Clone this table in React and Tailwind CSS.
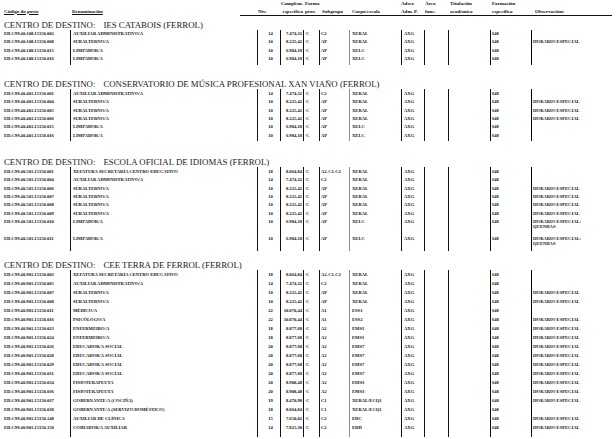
import React from 'react';

const COLS = 'grid grid-cols-[70px_187px_23px_23px_16px_30px_52px_23px_24px_42px_41px_1fr]';

const HE = 'HORARIO ESPECIAL';

const sections = [
  {
    name: 'IES CATABOIS (FERROL)',
    mt: 'mt-[4.5px]',
    rowH: 'h-[8.3px]',
    spacer: 'h-[2px]',
    rows: [
      ['ED.C99.40.108.15150.002', 'AUXILIAR ADMINISTRATIVO/A', '14', '7.474,32', 'C', 'C2', 'XERAL', ''],
      ['ED.C99.40.108.15150.008', 'SUBALTERNO/A', '10', '8.225,42', 'C', 'AP', 'XERAL', HE],
      ['ED.C99.40.108.15150.015', 'LIMPADOR/A', '10', '6.984,18', 'C', 'AP', 'XELC', ''],
      ['ED.C99.40.108.15150.016', 'LIMPADOR/A', '10', '6.984,18', 'C', 'AP', 'XELC', ''],
    ],
  },
  {
    name: 'CONSERVATORIO DE MÚSICA PROFESIONAL XAN VIAÑO (FERROL)',
    mt: 'mt-[15.8px]',
    rowH: 'h-[8.3px]',
    spacer: 'h-[2px]',
    rows: [
      ['ED.C99.40.401.15150.001', 'AUXILIAR ADMINISTRATIVO/A', '14', '7.474,32', 'C', 'C2', 'XERAL', ''],
      ['ED.C99.40.401.15150.004', 'SUBALTERNO/A', '10', '8.225,42', 'C', 'AP', 'XERAL', HE],
      ['ED.C99.40.401.15150.005', 'SUBALTERNO/A', '10', '8.225,42', 'C', 'AP', 'XERAL', HE],
      ['ED.C99.40.401.15150.006', 'SUBALTERNO/A', '10', '8.225,42', 'C', 'AP', 'XERAL', HE],
      ['ED.C99.40.401.15150.015', 'LIMPADOR/A', '10', '6.984,18', 'C', 'AP', 'XELC', ''],
      ['ED.C99.40.401.15150.016', 'LIMPADOR/A', '10', '6.984,18', 'C', 'AP', 'XELC', ''],
    ],
  },
  {
    name: 'ESCOLA OFICIAL DE IDIOMAS (FERROL)',
    mt: 'mt-[17.2px]',
    rowH: 'h-[8.3px]',
    spacer: 'h-[4px]',
    rows: [
      ['ED.C99.40.501.15150.001', 'XEFATURA SECRETARÍA CENTRO EDUCATIVO', '18', '8.064,84', 'C', 'A2-C1-C2', 'XERAL', ''],
      ['ED.C99.40.501.15150.004', 'AUXILIAR ADMINISTRATIVO/A', '14', '7.474,32', 'C', 'C2', 'XERAL', ''],
      ['ED.C99.40.501.15150.006', 'SUBALTERNO/A', '10', '8.225,42', 'C', 'AP', 'XERAL', HE],
      ['ED.C99.40.501.15150.007', 'SUBALTERNO/A', '10', '8.225,42', 'C', 'AP', 'XERAL', HE],
      ['ED.C99.40.501.15150.008', 'SUBALTERNO/A', '10', '8.225,42', 'C', 'AP', 'XERAL', HE],
      ['ED.C99.40.501.15150.009', 'SUBALTERNO/A', '10', '8.225,42', 'C', 'AP', 'XERAL', HE],
      ['ED.C99.40.501.15150.010', 'LIMPADOR/A', '10', '6.984,18', 'C', 'AP', 'XELC', 'HORARIO ESPECIAL:\nQUENDAS', 'h-[17px]'],
      ['ED.C99.40.501.15150.011', 'LIMPADOR/A', '10', '6.984,18', 'C', 'AP', 'XELC', 'HORARIO ESPECIAL:\nQUENDAS', 'h-[13px]'],
    ],
  },
  {
    name: 'CEE TERRA DE FERROL (FERROL)',
    mt: 'mt-[10.2px]',
    rowH: 'h-[9px]',
    spacer: 'h-[5px]',
    rows: [
      ['ED.C99.40.901.15150.003', 'XEFATURA SECRETARÍA CENTRO EDUCATIVO', '18', '8.064,84', 'C', 'A2-C1-C2', 'XERAL', ''],
      ['ED.C99.40.901.15150.005', 'AUXILIAR ADMINISTRATIVO/A', '14', '7.474,32', 'C', 'C2', 'XERAL', ''],
      ['ED.C99.40.901.15150.007', 'SUBALTERNO/A', '10', '8.225,42', 'C', 'AP', 'XERAL', HE],
      ['ED.C99.40.901.15150.008', 'SUBALTERNO/A', '10', '8.225,42', 'C', 'AP', 'XERAL', HE],
      ['ED.C99.40.901.15150.011', 'MÉDICO/A', '22', '10.870,44', 'C', 'A1', 'ESS1', ''],
      ['ED.C99.40.901.15150.016', 'PSICÓLOGO/A', '22', '10.870,44', 'C', 'A1', 'ESS2', HE],
      ['ED.C99.40.901.15150.023', 'ENFERMEIRO/A', '18', '8.877,68', 'C', 'A2', 'EMS1', HE],
      ['ED.C99.40.901.15150.024', 'ENFERMEIRO/A', '18', '8.877,68', 'C', 'A2', 'EMS1', HE],
      ['ED.C99.40.901.15150.026', 'EDUCADOR/A SOCIAL', '20', '8.877,68', 'C', 'A2', 'EMS7', HE],
      ['ED.C99.40.901.15150.028', 'EDUCADOR/A SOCIAL', '20', '8.877,68', 'C', 'A2', 'EMS7', HE],
      ['ED.C99.40.901.15150.029', 'EDUCADOR/A SOCIAL', '20', '8.877,68', 'C', 'A2', 'EMS7', HE],
      ['ED.C99.40.901.15150.031', 'EDUCADOR/A SOCIAL', '20', '8.877,68', 'C', 'A2', 'EMS7', HE],
      ['ED.C99.40.901.15150.034', 'FISIOTERAPEUTA', '20', '8.908,48', 'C', 'A2', 'EMS3', HE],
      ['ED.C99.40.901.15150.036', 'FISIOTERAPEUTA', '20', '8.908,48', 'C', 'A2', 'EMS3', HE],
      ['ED.C99.40.901.15150.037', 'GOBERNANTE/A (COCIÑA)', '19', '8.470,98', 'C', 'C1', 'XERAL/ECQ1', HE],
      ['ED.C99.40.901.15150.038', 'GOBERNANTE/A (SERVIZO DOMÉSTICO)', '18', '8.064,84', 'C', 'C1', 'XERAL/ECQ1', ''],
      ['ED.C99.40.901.15150.148', 'AUXILIAR DE CLÍNICA', '15', '7.650,02', 'C', 'C2', 'EDC', HE],
      ['ED.C99.40.901.15150.150', 'COIDADOR/A AUXILIAR', '14', '7.825,30', 'C', 'C2', 'EDD', HE],
    ],
  },
];

const bar = 'border-l border-[#111]';
const cell = 'pt-[1.6px] leading-[5px] whitespace-nowrap';

const Row = ({ r, h }) => {
  const [code, denom, niv, comp, forma, sub, corpo, obs, rowH] = r;
  return (
    <div className={`${COLS} ${rowH || h}`}>
      <div className={`${cell} pl-[4px]`}>{code}</div>
      <div className={`${cell} ${bar} pl-[2px]`}>{denom}</div>
      <div className={`${cell} ${bar} text-center pl-[3px]`}>{niv}</div>
      <div className={`${cell} ${bar} text-right pr-[1px]`}>{comp}</div>
      <div className={`${cell} ${bar} pl-[2px]`}>{forma}</div>
      <div className={`${cell} ${bar} pl-[1px]`}>{sub}</div>
      <div className={`${cell} border-l-[1.5px] border-[#8c8c8c] pl-[2px]`}>{corpo}</div>
      <div className={`${cell} ${bar} pl-[2px]`}>AXG</div>
      <div className={`${cell} ${bar}`}></div>
      <div className={`${cell} ${bar}`}></div>
      <div className={`${cell} ${bar} pl-[1px]`}>648</div>
      <div className={`${cell} border-l border-black pl-[1px] whitespace-pre`}>{obs}</div>
    </div>
  );
};

const Spacer = ({ h }) => (
  <div className={`${COLS} ${h}`}>
    <div></div>
    {Array.from({ length: 11 }).map((_, i) => (
      <div key={i} className={i === 5 ? 'border-l-[1.5px] border-[#8c8c8c]' : bar}></div>
    ))}
  </div>
);

const Header = () => (
  <div className="font-bold text-[5px] leading-[7.5px] text-[#111]">
    <div className={`${COLS} h-[15px]`}>
      <div className="pl-[4px] pt-[7.5px]"><span className="underline">Código do posto</span></div>
      <div className="pl-[2px] pt-[7.5px]"><span className="underline">Denominación</span></div>
      <div className="pt-[7.5px] pl-[1px]">Niv.</div>
      <div className="flex flex-col items-end pr-[0px] whitespace-nowrap">
        <span>Complem.</span>
        <span>específico</span>
      </div>
      <div className="pl-[2px] flex flex-col"><span>Forma</span><span>prov.</span></div>
      <div className="pl-[3px] pt-[7.5px]">Subgrupo</div>
      <div className="pl-[3px] pt-[7.5px] whitespace-nowrap">Corpo/escala</div>
      <div className="flex flex-col whitespace-nowrap"><span>Adscr.</span><span>Adm. P.</span></div>
      <div className="pl-[1px] flex flex-col"><span>Área</span><span>func.</span></div>
      <div className="pl-[2px] flex flex-col"><span>Titulación</span><span>académica</span></div>
      <div className="pl-[2px] flex flex-col"><span>Formación</span><span>específica</span></div>
      <div className="pl-[4px] pt-[7.5px]">Observacións</div>
    </div>
    <div className="ml-[240px] mr-[4px] border-t border-[#111]"></div>
  </div>
);

export default function App() {
  return (
    <div className="w-[616px] h-[439px] overflow-hidden bg-white text-[#111] font-[Liberation_Serif,serif]">
      <Header />
      {sections.map((s) => (
        <div key={s.name}>
          <div className={`${s.mt} h-[9px] leading-[9px] pl-[4px] text-[8.8px] whitespace-nowrap text-[#1a1a1a]`}>
            CENTRO DE DESTINO:<span className="ml-[8px]">{s.name}</span>
          </div>
          <div className="text-[4.6px] font-bold">
            {s.rows.map((r) => (
              <Row key={r[0]} r={r} h={s.rowH} />
            ))}
            <Spacer h={s.spacer} />
          </div>
        </div>
      ))}
    </div>
  );
}
